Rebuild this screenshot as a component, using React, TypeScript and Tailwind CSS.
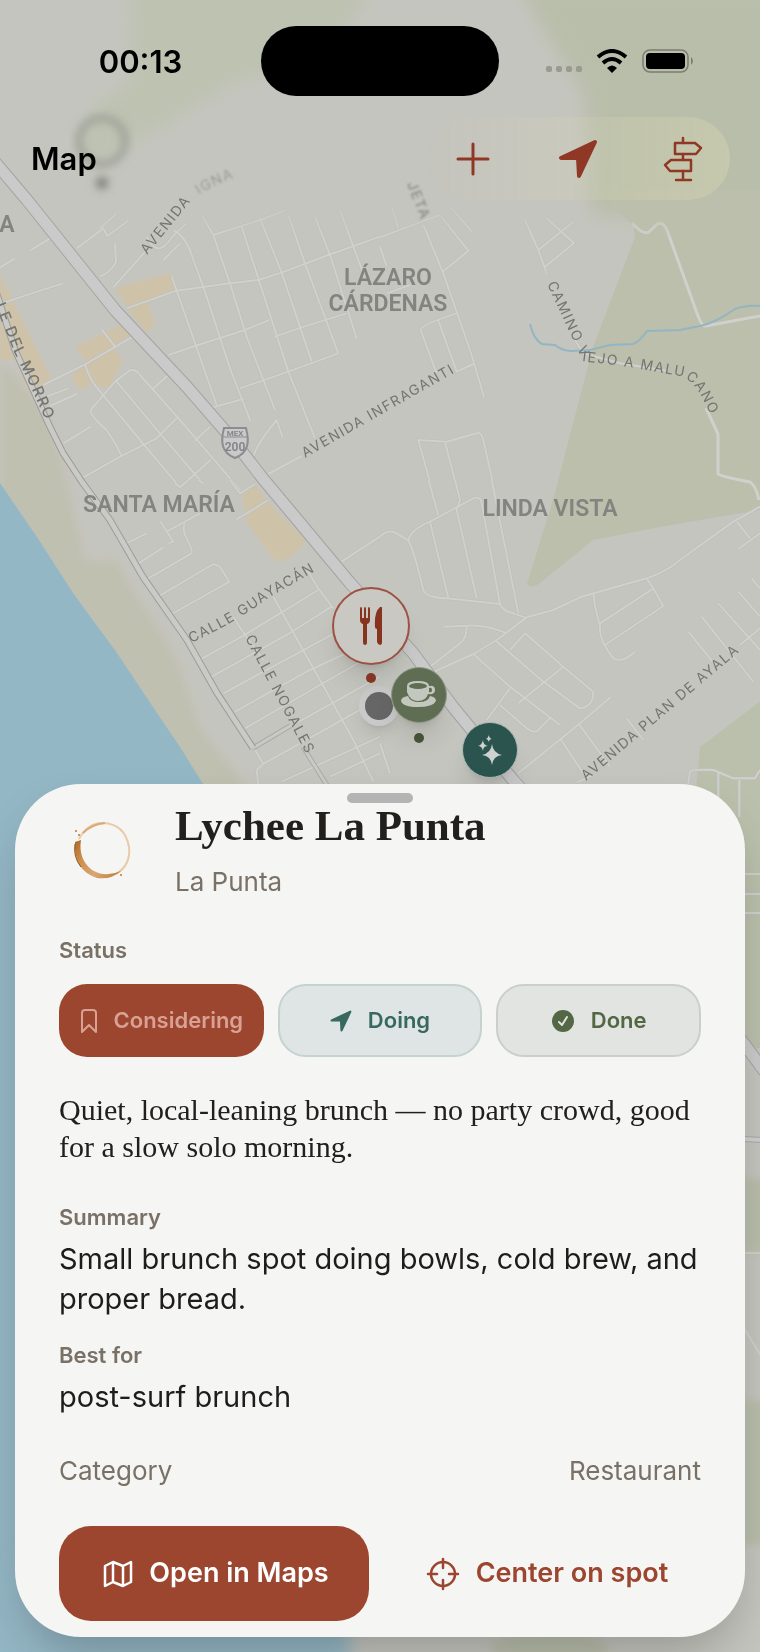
import type { ReactNode } from "react";

const SANS = "font-['Inter','Liberation_Sans',sans-serif]";
const SERIF = "font-['Liberation_Serif',serif]";

// Each tile holds its streets at three units to the pixel.
const TILES = [
  {
    x: 0,
    y: 200,
    roads: [
      "M90 152 L150 115 M230 145 L310 85 L322 108 L385 62 M300 85 L350 40",
      "M345 130 L348 185 Q335 215 300 230 M340 262 L440 150 M490 180 L540 130 M440 110 Q470 175 510 120 Q525 100 560 70",
      "M0 203 L45 175 M0 312 L75 287 L188 250 M305 388 L345 440 M130 555 L255 493 L395 412",
      "M255 493 Q270 545 305 580 L435 738 L540 862 L632 780 M150 618 L230 582 M140 590 L205 565",
      "M190 730 L272 680 M250 832 L360 770 L470 715 L530 655 M272 630 L345 545 L388 512 Q405 505 420 525 L540 660 L720 870 M272 630 Q268 645 320 690 L345 730 L365 768",
      "M350 545 L480 700 L610 852 M455 570 L505 525 M585 722 L630 680",
      "M505 465 L585 438 L735 390 L808 360 M380 325 L530 272 L690 250 L775 240 L845 218 L985 165 L1140 110",
      "M515 230 L575 400 L650 615 M520 90 Q560 110 580 180 L612 265 L690 505 L752 665",
      "M605 45 L640 105 L690 250 L740 410 L825 630 M640 105 L780 60 L860 30",
      "M725 80 L775 235 L865 515 L945 715 M780 55 L845 218 L935 485 M865 45 L915 190 L1015 460",
      "M945 50 L990 165 L1070 415 M1020 30 L1060 140 L1090 220 M640 622 L730 597 M720 565 L865 515 L1015 460",
      "M825 410 L905 382 L1040 340 M805 822 L905 768 M762 768 Q765 740 830 660 L848 712",
    ],
  },
  {
    x: 380,
    y: 200,
    roads: [
      "M0 112 L125 65 L180 45 M35 20 L55 85 M0 140 L20 200 M130 75 L188 215 L270 450 L312 590 M180 45 L265 152 L188 215",
      "M20 280 L90 255 M230 340 Q120 375 122 390 L170 520 M175 362 L230 515 L280 492 M435 60 L475 150 L500 220",
      "M475 150 L580 65 M495 200 L582 130 L500 55 M210 20 L275 95 M585 420 L610 460 L720 490 L860 512",
      "M115 720 L200 725 L290 700 Q305 695 310 720 L350 900 M115 720 L165 900 M195 725 L240 900",
    ],
  },
  {
    x: 0,
    y: 480,
    roads: [
      "M380 190 L440 160 M415 250 L490 202 M440 298 L575 220 Q580 215 560 175 Q545 150 555 130 M475 350 L640 252 L660 260 L688 305 L510 405",
      "M480 122 L520 185 L505 190 M500 155 L600 100 M525 10 L540 22 L565 0 M595 0 L610 10 M710 118 L805 60 M690 0 L720 40 L765 12",
      "M590 545 L725 470 L955 330 M635 590 L860 465 L995 380 M670 640 L920 505 L1040 440 M705 695 L930 570 L1060 510",
      "M735 745 L960 615 L1090 540 M870 740 L1140 590 M790 852 L1080 690 M770 870 L790 852 M845 905 L1140 770 M990 890 L1140 820",
      "M700 410 L725 450 L790 540 M820 350 L870 440 L960 600 L1060 780 L1120 905 M915 260 L955 325 L1000 385",
      "M1025 245 L1140 170 M760 800 L790 852 M770 870 L775 912",
    ],
  },
  {
    x: 380,
    y: 480,
    roads: [
      "M0 170 Q25 145 50 160 L85 182 Q100 205 130 330 Q135 352 200 355 L360 372 Q370 395 400 400 L435 412",
      "M85 182 Q90 150 150 125 L280 55 Q300 45 305 70 L360 372 M145 0 L175 105 M150 125 L205 355 M225 0 L240 60 L230 90 L290 355 M335 0 L415 400",
      "M130 590 L280 522 L350 480 L440 412 L520 390 L600 352 L800 295 Q860 275 900 240 L1060 125 L1140 80",
      "M190 440 L260 437 Q320 435 375 458 M260 440 Q260 475 240 490 L150 560 M345 480 L490 605 L600 685 Q640 680 640 635 L550 560 L435 460 L390 510",
      "M280 522 L390 620 L540 735 M550 560 L415 670 M390 625 L320 720 M360 675 L440 745 Q465 765 480 745 L510 715",
      "M640 340 Q645 390 660 435 Q655 480 700 535 Q725 550 765 515 M660 430 L820 325 L850 378 L675 495 M800 295 L820 325",
      "M1070 125 L1110 175 M1075 207 L1140 160 M1115 295 L1140 325 M1075 335 L1140 410 M1015 370 L1140 510 M965 410 L1120 605 M925 455 L1010 560",
      "M1080 495 L1140 445 M415 880 L600 730 L692 652 M595 730 L690 860 M540 775 L610 880 M740 715 L790 780 M590 908 L640 885",
      "M925 912 L930 875 Q932 868 1000 870 L1060 895 L1125 895 L1140 870 M1015 880 L1015 1010 M1078 900 L1078 1010 M0 790 L30 880",
    ],
  },
];

const HIGHWAY =
  "M-20 145 L0 168 L27 200 L115 310 L187 387 L233 440 L264 480 L300 523 L350 583 L413 653 L453 707 L513 780 L640 920 L745 1045 L765 1072";
const MORRO = "M-6 285 L15 350 L50 427 L63 453 L82 482 L110 520 L143 577 L187 640 L217 693 L253 748";

function MapCanvas() {
  return (
    <svg
      aria-hidden="true"
      className="absolute inset-0 size-full"
      viewBox="0 0 760 1652"
      preserveAspectRatio="xMidYMin slice"
    >
      <defs>
        <filter id="haze" x="-20%" y="-20%" width="140%" height="140%">
          <feGaussianBlur stdDeviation="9" />
        </filter>
        <filter id="smear" x="-20%" y="-20%" width="140%" height="140%">
          <feGaussianBlur stdDeviation="4" />
        </filter>
        <filter id="soft" x="-20%" y="-20%" width="140%" height="140%">
          <feGaussianBlur stdDeviation="1" />
        </filter>
        <linearGradient id="fade" x1="0" y1="0" x2="0" y2="1652" gradientUnits="userSpaceOnUse">
          <stop offset="0.115" stopColor="#000" />
          <stop offset="0.145" stopColor="#fff" />
        </linearGradient>
        <mask id="below-header" maskUnits="userSpaceOnUse" x="0" y="0" width="760" height="1652">
          <rect width="760" height="1652" fill="url(#fade)" />
        </mask>
        <path id="ignacio" d="M147 255 L190 202 Q205 187 245 174" />
        <path id="jeta" d="M407 184 L430 242" />
        <path id="morro" d="M-5 305 L14 352 L30 385 L49 428 L60 450" />
        <path id="infraganti" d="M305 458 L480 358" />
        <path id="camino" d="M547 284 L588 372" />
        <path id="malucano" d="M582 361 L630 367 L680 376 Q695 380 707 408 L730 450" />
        <path id="guayacan" d="M191 643 Q240 620 268 598 L345 554" />
        <path id="nogales" d="M245 638 L280 704 L325 790" />
        <path id="ayala" d="M586 781 L765 630" />
      </defs>

      <rect width="760" height="1652" fill="#c5c5bf" />
      <g filter="url(#haze)">
        <path d="M130 -20 L132 80 Q70 115 80 170 Q150 135 240 80 Q340 70 375 -20 Z" fill="#bdc2b1" />
        <path d="M515 -20 Q560 60 582 90 Q592 150 590 215 L790 230 L790 -20 Z" fill="#b9beaa" />
      </g>
      <path d="M610 203 L633 225 L635 237 L593 347 L553 500 L527 584 Q530 590 540 583 L593 540 L660 527 L770 508 L770 190 L605 190 Z" fill="#bbbfab" />
      <path d="M770 694 L700 747 L695 800 L700 1048 L770 1048 Z" fill="#bbc0ac" />
      <g filter="url(#smear)">
        <path d="M740 1178 H770 V1253 H740 Z M740 1400 H770 V1545 H740 Z" fill="#b9beaa" />
        <ellipse cx="550" cy="1648" rx="60" ry="14" fill="#b9beaa" />
        <path d="M0 360 L27 388 L45 410 L65 470 L85 560 L117 560 L133 590 L167 640 L180 667 L200 727 L250 790 L0 790 Z" fill="#c0c0b1" />
      </g>
      <path d="M0 483 L37 537 L73 593 L117 653 L153 707 L180 747 L205 787 L300 1652 L0 1652 Z" fill="#94b7c5" />
      <path d="M20 1560 H350 V1680 H20 Z" fill="#94b7c5" filter="url(#haze)" />

      <g fill="#cec2a9" filter="url(#soft)">
        <path d="M0 273 L13 300 L37 350 L52 380 L27 392 L17 360 L0 360 Z" />
        <path d="M115 288 L170 273 L177 289 L147 300 L155 323 L147 333 L127 308 Z" />
        <path d="M75 347 L127 322 L133 332 L113 347 L123 360 L110 388 L90 385 L80 390 L72 380 L75 370 L87 363 Z" />
        <path d="M242 495 L255 485 L268 502 L307 542 L293 555 L283 562 L273 558 L247 523 Z" />
      </g>

      <g mask="url(#below-header)" fill="none" strokeLinejoin="round">
        {TILES.map((tile) => {
          const d = tile.roads.join(" ");
          return (
            <g key={`${tile.x}-${tile.y}`} transform={`translate(${tile.x} ${tile.y}) scale(0.33333)`}>
              <path d={d} stroke="#bcbcb8" strokeWidth="9" />
              <path d={d} stroke="#d0d1cd" strokeWidth="6" />
            </g>
          );
        })}
        <path
          d="M632 223 Q645 237 650 231 L657 224 Q663 221 667 230 L698 316 Q702 327 706 326 L765 315 M706 408 L718 434 V474 Q718 476 750 482 Q756 486 759 500"
          stroke="#d0d0cd"
          strokeWidth="3"
        />
        <path d="M742 874 H765 M742 894 H765 M742 913 H765 M742 1253 H765 M742 1325 L765 1362" stroke="#cfd0cc" strokeWidth="2" />
        <path d="M742 1139 L765 1140" stroke="#a9a9a8" strokeWidth="6" />
        <path d="M742 1139 L765 1140" stroke="#cfcfcd" strokeWidth="4" />
        <path d="M253 748 L290 726 M303 747 L330 790" stroke="#a9a9a7" strokeWidth="5" />
        <path d="M253 748 L290 726 M303 747 L330 790" stroke="#c9c9c6" strokeWidth="3" />
        <path d={MORRO} stroke="#9c9c9a" strokeWidth="7" />
        <path d={MORRO} stroke="#cacac6" strokeWidth="5" />
        <path
          d="M530 324 Q534 340 542 344 L555 345 Q562 351 572 351 L590 350 L610 345 L633 344 Q640 341 647 331 L680 330 L700 326 Q715 323 735 309 Q745 305 765 306"
          stroke="#92b5c3"
          strokeWidth="2"
        />
      </g>
      <g fill="none" strokeLinejoin="round">
        <path d={HIGHWAY} stroke="#a3a3a2" strokeWidth="13" />
        <path d={HIGHWAY} stroke="#cacaca" strokeWidth="11" />
      </g>

      <g filter="url(#smear)">
        <circle cx="102" cy="141" r="23" fill="none" stroke="#9a9d94" strokeWidth="6" />
        <circle cx="102" cy="183" r="6" fill="#7b7c77" />
      </g>

      <path
        d="M224 428 H246 Q249 440 247 446 Q245 454 235 458 Q225 454 223 446 Q221 440 224 428 Z"
        fill="#c9c9c9"
        stroke="#8d8d91"
        strokeWidth="2"
      />
      <path d="M223 437 H247" stroke="#8d8d91" strokeWidth="1" />

      <g className="font-['Inter',sans-serif] text-[14px] tracking-widest" fill="#747470">
        <text>
          <textPath href="#infraganti">AVENIDA INFRAGANTI</textPath>
        </text>
        <text>
          <textPath href="#camino">CAMINO V</textPath>
        </text>
        <text>
          <textPath href="#malucano">IEJO A MALUCANO</textPath>
        </text>
        <text>
          <textPath href="#guayacan">CALLE GUAYACÁN</textPath>
        </text>
        <text>
          <textPath href="#nogales">CALLE NOGALES</textPath>
        </text>
        <text>
          <textPath href="#ayala">AVENIDA PLAN DE AYALA</textPath>
        </text>
        <text className="text-[15px] font-medium">
          <textPath href="#morro">LE DEL MORRO</textPath>
        </text>
        <text>
          <textPath href="#ignacio">AVENIDA</textPath>
        </text>
        <text filter="url(#soft)" opacity="0.5">
          <textPath href="#ignacio" startOffset="80">
            IGNA
          </textPath>
        </text>
        <text filter="url(#soft)" opacity="0.8">
          <textPath href="#jeta">JETA</textPath>
        </text>
      </g>
      <g className="font-['Roboto',sans-serif] text-[23px] font-semibold" fill="#838380" textAnchor="middle">
        <text x="388" y="285">LÁZARO</text>
        <text x="388" y="311">CÁRDENAS</text>
        <text x="159" y="512">SANTA MARÍA</text>
        <text x="550" y="516">LINDA VISTA</text>
        <text x="7" y="232">A</text>
      </g>
      <g className="font-['Roboto',sans-serif] font-semibold" fill="#838387" textAnchor="middle">
        <text x="235" y="436" className="text-[8px]">MEX</text>
        <text x="235" y="451" className="text-[12px]">200</text>
      </g>
    </svg>
  );
}

function Pins() {
  return (
    <>
      <span className="absolute top-[686px] left-[359px] z-10 grid size-10 place-items-center rounded-full bg-[#c9c9c9] shadow-lg">
        <span className="size-7 rounded-full bg-[#666666]" />
      </span>
      <button
        type="button"
        aria-label="Lychee La Punta"
        className="absolute top-[587px] left-[332px] z-10 grid size-[78px] place-items-center rounded-full border-2 border-[#9c5142] bg-[#cac8c2] shadow-xl"
      >
        <svg viewBox="0 0 24 38" className="h-[38px] w-6 fill-[#87341f]">
          <path d="M1 2 Q1 0 2 0 T3 2 V11 H5 V2 Q5 0 6 0 T7 2 V11 H9 V2 Q9 0 10 0 T11 2 V13 Q11 16 8 17 V35 Q8 38 6 38 T4 35 V17 Q1 16 1 13 Z" />
          <path d="M23 1 V35 Q23 38 21 38 T18 35 V22 Q16 22 16 20 Q15 5 21 0 Q23 -1 23 1 Z" />
        </svg>
      </button>
      <span className="absolute top-[673px] left-[366px] z-10 size-2.5 rounded-full bg-[#843523]" />
      <button
        type="button"
        aria-label="Café"
        className="absolute top-[667px] left-[391px] z-10 grid size-14 place-items-center rounded-full border border-[#8e9886] bg-[#5f6d52] shadow-xl"
      >
        <svg viewBox="0 0 36 28" className="h-7 w-9">
          <path
            d="M7 15 Q0 16 0 20 Q2 26 17 26 T35 20 Q35 16 29 15 Q27 21 18 21 T7 15 Z"
            fill="#c2c8bd"
          />
          <path
            d="M6 5 Q6 0 17 0 T28 5 Q34 4 34 9 T27 13 Q25 20 17 20 T6 11 Z"
            fill="#c2c8bd"
          />
          <path d="M28 7 Q31 6 31 9 T28 11 Z" fill="#5f6d52" />
          <ellipse cx="17" cy="5" rx="9" ry="3" fill="#5f6d52" />
        </svg>
      </button>
      <span className="absolute top-[733px] left-[414px] z-10 size-2.5 rounded-full bg-[#455236]" />
      <button
        type="button"
        aria-label="Highlight"
        className="absolute top-[722px] left-[462px] z-10 grid size-14 place-items-center rounded-full border border-[#a9bab5] bg-[#2b544e] shadow-xl"
      >
        <svg viewBox="0 0 26 30" className="h-[30px] w-[26px] fill-[#cbd2cf]">
          <path d="M15 9 Q16 18 25 20 Q16 21 15 30 Q14 21 5 20 Q14 18 15 9 Z" />
          <path d="M6 5 Q6 10 11 11 Q6 11 6 16 Q5 11 1 11 Q5 10 6 5 Z" />
          <path d="M12 0 Q12 3 15 4 Q12 4 12 7 Q11 4 9 4 Q11 3 12 0 Z" />
        </svg>
      </button>
    </>
  );
}

function ArrowIcon({ className }: { className: string }) {
  return (
    <svg viewBox="0 0 40 40" className={className} fill="currentColor" aria-hidden="true">
      <path
        d="M37 3 L3 19 H20 L21 37 Z"
        stroke="currentColor"
        strokeWidth="4"
        strokeLinejoin="round"
      />
    </svg>
  );
}

function StatusBar() {
  return (
    <div className="grid h-[70px] grid-cols-[1fr_238px_1fr] items-center text-black">
      <time className="pt-0.5 pl-5 text-center text-[31px] font-semibold">00:13</time>
      <div className="h-[70px] rounded-full bg-black" />
      <div className="flex items-center justify-center pr-5">
        <span className="mt-4 flex gap-1">
          <span className="size-1.5 rounded-[2px] bg-[#999a90]" />
          <span className="size-1.5 rounded-[2px] bg-[#999a90]" />
          <span className="size-1.5 rounded-[2px] bg-[#999a90]" />
          <span className="size-1.5 rounded-[2px] bg-[#999a90]" />
        </span>
        <svg viewBox="0 0 32 24" className="ml-3.5 h-6 w-8" fill="none" stroke="#000" strokeWidth="4">
          <path d="M2 8 Q16 -4 30 8" />
          <path d="M7 14 Q16 6 25 14" />
          <path d="M16 24 L11 19 Q16 14 21 19 Z" fill="#000" stroke="none" />
        </svg>
        <svg viewBox="0 0 52 24" className="ml-3.5 h-6 w-[52px]">
          <rect x="1" y="1" width="45" height="22" rx="7" fill="none" stroke="#7b7e70" strokeWidth="1.5" />
          <rect x="4" y="4" width="39" height="16" rx="4" />
          <path d="M49 8 Q53 12 49 16 Z" fill="#7b7e70" />
        </svg>
      </div>
    </div>
  );
}

function Toolbar() {
  return (
    <header className="mt-[21px] flex h-[83px] items-center justify-between pr-[30px] pl-[31px]">
      <h1 className="pt-0.5 text-[31px] font-semibold text-black">Map</h1>
      <div className="flex h-full gap-[11px] rounded-full bg-linear-to-r from-transparent to-[#d8d8b2]/40 text-[#8f3825]">
        <button type="button" aria-label="Add" className="grid w-[94px] place-items-center">
          <svg viewBox="0 0 34 34" className="size-[34px]" stroke="currentColor" strokeWidth="3" strokeLinecap="round">
            <path d="M2 17 H32 M17 2 V32" />
          </svg>
        </button>
        <button type="button" aria-label="My location" className="grid w-[94px] place-items-center">
          <ArrowIcon className="size-10" />
        </button>
        <button type="button" aria-label="Directions" className="grid w-[94px] place-items-center">
          <svg
            viewBox="0 0 40 46"
            className="h-[46px] w-10"
            fill="none"
            stroke="currentColor"
            strokeWidth="2.5"
            strokeLinecap="round"
            strokeLinejoin="round"
          >
            <path d="M20 2 V7 M20 18 V24 M20 35 V44 M13 44 H28" />
            <path d="M12 7 H32 L38 12 L33 18 H12 Z" />
            <path d="M28 24 H8 L2 29 L7 35 H28 Z" />
          </svg>
        </button>
      </div>
    </header>
  );
}

function CoffeeRing() {
  return (
    <svg viewBox="0 0 86 86" className="size-[86px] shrink-0" fill="none" aria-hidden="true">
      <defs>
        <linearGradient id="coffee" x1="16" y1="30" x2="66" y2="70" gradientUnits="userSpaceOnUse">
          <stop offset="0" stopColor="#a8641f" />
          <stop offset="0.3" stopColor="#cf8f4c" />
          <stop offset="0.6" stopColor="#d9a672" />
          <stop offset="1" stopColor="#b8742f" />
        </linearGradient>
      </defs>
      <path d="M20 32 Q28 16 44 16 Q66 17 70 40 Q72 58 57 67" stroke="#e9cba8" strokeWidth="2" />
      <path d="M24 26 Q33 17 46 16" stroke="#dba876" strokeWidth="2" />
      <path d="M16 35 L22 33 Q19 52 33 63 Q46 71 62 64 Q52 73 38 71 Q14 63 16 35 Z" fill="url(#coffee)" />
      <path d="M16 37 Q14 50 22 60" stroke="#8f5215" strokeWidth="1" />
      <g fill="#b8783c">
        <circle cx="17" cy="24" r="1" />
        <circle cx="20" cy="28" r="1" />
        <circle cx="62" cy="68" r="1" />
      </g>
    </svg>
  );
}

function StatusButton({ className, icon, children }: { className: string; icon: ReactNode; children: ReactNode }) {
  return (
    <button
      type="button"
      className={`flex h-[73px] items-center justify-center gap-4 rounded-[28px] text-[22px] font-semibold ${className}`}
    >
      {icon}
      {children}
    </button>
  );
}

function Field({ label, children }: { label: string; children: ReactNode }) {
  return (
    <div>
      <dt className="text-[22px] leading-7 font-semibold text-[#797166]">{label}</dt>
      <dd className="mt-2 text-[29px] leading-10 text-[#1e1d1b]">{children}</dd>
    </div>
  );
}

function SpotSheet() {
  return (
    <section className="relative z-20 mx-[15px] mt-auto mb-[15px] rounded-[66px] bg-[#f5f5f4] px-11 pt-4 pb-4 shadow-2xl">
      <span className="absolute top-[9px] left-1/2 h-2.5 w-[66px] -translate-x-1/2 rounded-full bg-[#b4b4b4]" />

      <div className="flex items-center gap-[30px]">
        <CoffeeRing />
        <div>
          <h2 className={`pt-0.5 text-[43px] leading-12 font-bold text-[#22201c] ${SERIF}`}>Lychee La Punta</h2>
          <p className="mt-3.5 text-[26px] leading-9 text-[#797166]">La Punta</p>
        </div>
      </div>

      <h3 className="mt-9 text-[22px] leading-7 font-semibold text-[#797166]">Status</h3>
      <div className="mt-5 grid grid-cols-3 gap-3.5">
        <StatusButton
          className="bg-[#9c452f] text-[#d9a193]"
          icon={
            <svg viewBox="0 0 18 24" className="h-6 w-[18px]" fill="none" stroke="currentColor" strokeWidth="2" strokeLinejoin="round">
              <path d="M2 23 V4 Q2 1 5 1 H13 Q16 1 16 4 V23 L9 16 Z" />
            </svg>
          }
        >
          Considering
        </StatusButton>
        <StatusButton
          className="border-2 border-[#c4d2d0] bg-[#dfe5e4] text-[#37695f]"
          icon={<ArrowIcon className="size-[22px]" />}
        >
          Doing
        </StatusButton>
        <StatusButton
          className="border-2 border-[#cad0c9] bg-[#e1e4e0] text-[#536744]"
          icon={
            <svg viewBox="0 0 24 24" className="size-6" fill="none" strokeLinecap="round" strokeLinejoin="round">
              <circle cx="12" cy="12" r="11" fill="currentColor" />
              <path d="M8 13 L11 16 L16 8" stroke="#e1e4e0" strokeWidth="2" />
            </svg>
          }
        >
          Done
        </StatusButton>
      </div>

      <p className={`mt-[34px] text-[30px] leading-[37px] text-[#22201c] ${SERIF}`}>
        Quiet, local-leaning brunch — no party crowd, good for a slow solo morning.
      </p>

      <dl className="mt-[38px] flex flex-col gap-[22px]">
        <Field label="Summary">Small brunch spot doing bowls, cold brew, and proper bread.</Field>
        <Field label="Best for">post-surf brunch</Field>
      </dl>
      <dl className="mt-9 flex justify-between text-[26px] leading-9 text-[#797166]">
        <dt>Category</dt>
        <dd>Restaurant</dd>
      </dl>

      <div className="mt-[37px] flex h-[95px] gap-3.5 text-[27px] font-semibold">
        <button
          type="button"
          className="flex w-[310px] items-center justify-center gap-4 rounded-[32px] bg-[#9c452f] pl-1 text-white"
        >
          <svg viewBox="0 0 30 28" className="h-7 w-[30px]" fill="none" stroke="currentColor" strokeWidth="2.5" strokeLinejoin="round">
            <path d="M2 6 L10 2 L20 6 L28 2 V22 L20 26 L10 22 L2 26 Z M10 2 V22 M20 6 V26" />
          </svg>
          Open in Maps
        </button>
        <button type="button" className="flex flex-1 items-center justify-center gap-4 pl-2.5 text-[#9c452f]">
          <svg viewBox="0 0 34 34" className="size-[34px]" fill="none" stroke="currentColor" strokeWidth="2.5" strokeLinecap="round">
            <circle cx="17" cy="17" r="12" />
            <path d="M17 2 V11 M17 23 V32 M2 17 H11 M23 17 H32" />
          </svg>
          Center on spot
        </button>
      </div>
    </section>
  );
}

export default function App() {
  return (
    <main className={`relative flex min-h-screen flex-col overflow-hidden bg-[#c5c5bf] ${SANS}`}>
      <MapCanvas />
      <Pins />
      <div className="relative z-20 pt-[26px] pb-[584px]">
        <StatusBar />
        <Toolbar />
      </div>
      <SpotSheet />
    </main>
  );
}
